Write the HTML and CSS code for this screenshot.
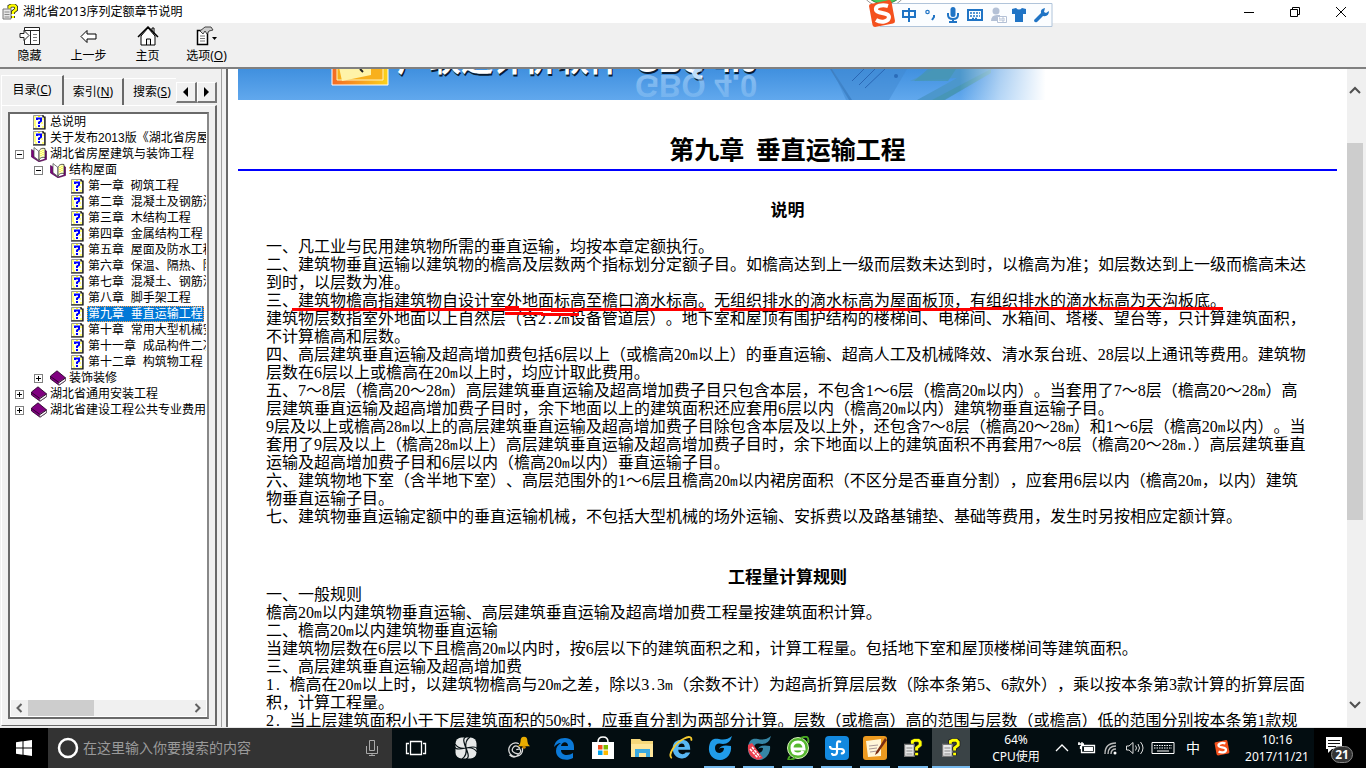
FILE: index.html
```html
<!DOCTYPE html>
<html lang="zh-CN">
<head>
<meta charset="utf-8">
<title>湖北省2013序列定额章节说明</title>
<link rel="stylesheet" href="styles.css">
</head>
<body>
<svg class="defs" aria-hidden="true">
  <defs>
    <symbol id="help" viewBox="0 0 16 16">
      <path d="M1 5h8v10H1z" fill="#e8e8e8" stroke="#777"/><path d="M2.5 8h5M2.5 10.5h5M2.5 13h5" stroke="#888"/>
      <path d="M7.5 4.5V2.5L9.500 1.500h3l1.500 1.500v2.500L11 8v2M11 12v2" fill="none" stroke="#222" stroke-width="4"/>
      <path d="M7.500 4.500V2.500L9.500 1.500h3l1.500 1.500v2.500L11 8v2M11 12v2" fill="none" stroke="#ff0" stroke-width="2.400"/>
    </symbol>
    <symbol id="page" viewBox="0 0 16 16">
      <path d="M2.500 1.500h9l2 2v11h-11z" fill="#fffef0" stroke="#999"/><path d="M3 3h2M11 5h2M3 7h2M3 11h2M11 13h2M4 13h2M10 9h2M3 5h1M3 9h2M7 2.500h2" stroke="#ff0"/>
      <path d="M12 1v2h2v12H2" fill="none" stroke="#000" stroke-width="1.200"/>
      <path d="M6 6V4.500h4v2.500L8 8.500v1.500M8 11v2" fill="none" stroke="#00f" stroke-width="2"/>
    </symbol>
    <symbol id="open" viewBox="0 0 16 16">
      <path d="M.5 3.500L3 5v6l5 4 6-2V4l1.500 1v8.500L8 15.800.5 11z" fill="#800080" stroke="#400040" stroke-width=".6"/>
      <path d="M3 1.500l5 4v9l-5-4z" fill="#fff" stroke="#555" stroke-width=".8"/><path d="M8 5.500c1-3 3-3.500 6-3v9c-3-.5-5 0-6 3z" fill="#ffffc0" stroke="#333" stroke-width=".8"/><path d="M10 5v6M12 4v6" stroke="#ee0" stroke-dasharray="1 1"/>
    </symbol>
    <symbol id="book" viewBox="0 0 16 16">
      <path d="M.5 6L7 .8l8.500 7v3L9 15.200.5 9z" fill="#800080" stroke="#200020" stroke-width=".8"/>
      <path d="M8.500 12l7-4v2.500l-6.500 4.500z" fill="#fff" stroke="#555" stroke-width=".6"/><path d="M.5 6.500l8.500 6 6.500-4.500" fill="none" stroke="#300030"/>
    </symbol>
    <symbol id="sogou" viewBox="0 0 28 28">
      <path d="M1 6Q1 4 3 4L21 0Q23 0 23.500 2L27 21Q27 23 25 23.500L7 27Q5 27 4.500 25Z" fill="#f4511e"/>
      <path d="M20 6C14 4 7 6 8 10s13 2 13 7-8 6-13 3" fill="none" stroke="#fff" stroke-width="4"/>
    </symbol>
  </defs>
</svg>

<header class="titlebar">
  <svg class="app-icon"><use href="#help"/></svg>
  <span class="caption">湖北省2013序列定额章节说明</span>
  <button class="win" aria-label="最小化"><svg viewBox="0 0 12 12"><path d="M1 6.500h10"/></svg></button>
  <button class="win" aria-label="还原"><svg viewBox="0 0 12 12"><path d="M1.500 3.500h7v7h-7zM3.500 3V1.500h7v7H9"/></svg></button>
  <button class="win" aria-label="关闭"><svg viewBox="0 0 12 12"><path d="M1 1l10 10M11 1L1 11"/></svg></button>
</header>

<div class="ime">
  <svg viewBox="0 0 194 30">
    <circle cx="24" cy="-18" r="25" fill="#fff" stroke="#999"/><circle cx="24" cy="-18" r="22" fill="#45c85c" stroke="#397c45"/>
    <path d="M20 3.500h172v23H20z" fill="#fbfdff" stroke="#b0c4da"/>
    <use href="#sogou" x="8" y="0" width="28" height="28"/>
    <g fill="none" stroke="#2074c5" stroke-width="2">
      <path d="M43 11h12v6H43zM49 8v14"/><circle cx="67.500" cy="12" r="1.700" stroke-width="1.200"/><path d="M74 15v2l-2 3"/>
      <path d="M88 13v2q0 4 5 4t5-4v-2M93 19v3M89 22h8"/><path d="M108 10h14v10h-14z"/>
      <path d="M110 13h10M110 16h10M112 18.500h6" stroke-dasharray="2 1" stroke-width="1.500"/>
    </g>
    <rect x="90.500" y="7" width="5" height="10" rx="2.500" fill="#2074c5"/>
    <g fill="#b4c1d6"><circle cx="136" cy="11" r="3.500"/><path d="M131 21q0-6 6-6h3v6z"/><path d="M137.500 16.500h9v6h-9z" fill="#fff" stroke="#b4c1d6"/><path d="M139 18h1v3M142 18h2v3h-2z" fill="none" stroke="#b4c1d6"/></g>
    <path d="M152 9l4-1q3 3 6 0l4 1v5h-3v8h-8v-8h-3z" fill="#2074c5"/>
    <path d="M174 20l7-7q-1-4 4-5l-1 4 2 1 3-2q0 6-6 5l-6 6q-3 1-3-2z" fill="#2074c5"/>
  </svg>
</div>

<nav class="toolbar">
  <button><svg viewBox="0 0 22 20"><path d="M5.500 1.500h15v17h-15zM5 4.500h15M11.500 5v13" fill="#fff" stroke="#222"/><path d="M14 8.500h4M14 11.500h4M14 14.500h4" stroke="#777"/><path d="M1 7.500h4v-3l5 5-5 5v-3H1z" fill="#fff" stroke="#222"/></svg>隐藏</button>
  <button><svg viewBox="0 0 22 20"><path d="M3 10.500l6-6v3.500h9v5H9v3.500z" fill="#fff" stroke="#000"/></svg>上一步</button>
  <button><svg viewBox="0 0 22 20"><path d="M4 10v9h14v-9l-7-8zM9.500 19v-6h4v6M15 6V2h2v6" fill="#fff" stroke="#000"/><path d="M1 11L11 1l10 10" fill="none" stroke="#000" stroke-width="1.500"/></svg>主页</button>
  <button><svg viewBox="0 0 22 20"><path d="M1.500 4.500h10v14h-10z" fill="#fff" stroke="#000" stroke-width="1.500"/><path d="M4 10h5M4 12.500h5M4 15h5" stroke="#777"/><path d="M4 5l5-4 6 0 2 3-4 1-2 3-2-3-2 3z" fill="#ccc" stroke="#444"/><path d="M16 11h5l-2.500 3z"/></svg><span>选项(<u>O</u>)</span></button>
</nav>

<main class="work">
  <aside class="side">
    <div class="tabs">
      <button class="tab current"><span>目录(<u>C</u>)</span></button>
      <button class="tab"><span>索引(<u>N</u>)</span></button>
      <button class="tab last"><span>搜索(<u>S</u>)</span></button>
      <button class="spin" aria-label="向左"><svg viewBox="0 0 10 10"><path d="M7 0v10L2 5z"/></svg></button>
      <button class="spin" aria-label="向右"><svg viewBox="0 0 10 10"><path d="M3 0v10l5-5z"/></svg></button>
    </div>
    <div class="tabpage">
      <div class="treebox">
        <ul class="tree">
          <li class="l0"><i></i><svg><use href="#page"/></svg><a href="#">总说明</a></li>
          <li class="l0"><i></i><svg><use href="#page"/></svg><a href="#">关于发布2013版《湖北省房屋</a></li>
          <li class="l0"><i class="box"></i><svg><use href="#open"/></svg><a href="#">湖北省房屋建筑与装饰工程</a></li>
          <li class="l1"><i class="box"></i><svg><use href="#open"/></svg><a href="#">结构屋面</a></li>
          <li class="l2"><i></i><svg><use href="#page"/></svg><a href="#">第一章  砌筑工程</a></li>
          <li class="l2"><i></i><svg><use href="#page"/></svg><a href="#">第二章  混凝土及钢筋混</a></li>
          <li class="l2"><i></i><svg><use href="#page"/></svg><a href="#">第三章  木结构工程</a></li>
          <li class="l2"><i></i><svg><use href="#page"/></svg><a href="#">第四章  金属结构工程</a></li>
          <li class="l2"><i></i><svg><use href="#page"/></svg><a href="#">第五章  屋面及防水工程</a></li>
          <li class="l2"><i></i><svg><use href="#page"/></svg><a href="#">第六章  保温、隔热、防</a></li>
          <li class="l2"><i></i><svg><use href="#page"/></svg><a href="#">第七章  混凝土、钢筋混</a></li>
          <li class="l2"><i></i><svg><use href="#page"/></svg><a href="#">第八章  脚手架工程</a></li>
          <li class="l2"><i></i><svg><use href="#page"/></svg><a href="#" class="selected">第九章  垂直运输工程</a></li>
          <li class="l2"><i></i><svg><use href="#page"/></svg><a href="#">第十章  常用大型机械安</a></li>
          <li class="l2"><i></i><svg><use href="#page"/></svg><a href="#">第十一章  成品构件二次</a></li>
          <li class="l2"><i></i><svg><use href="#page"/></svg><a href="#">第十二章  构筑物工程</a></li>
          <li class="l1"><i class="box plus"></i><svg><use href="#book"/></svg><a href="#">装饰装修</a></li>
          <li class="l0"><i class="box plus"></i><svg><use href="#book"/></svg><a href="#">湖北省通用安装工程</a></li>
          <li class="l0"><i class="box plus"></i><svg><use href="#book"/></svg><a href="#">湖北省建设工程公共专业费用</a></li>
        </ul>
        <div class="hbar">
          <svg viewBox="0 0 17 15"><path d="M10.500 3.500l-4 4 4 4"/></svg>
          <div class="track"><div class="thumb"></div></div>
          <svg viewBox="0 0 17 15"><path d="M6.500 3.500l4 4-4 4"/></svg>
        </div>
      </div>
    </div>
  </aside>

  <section class="viewer">
    <article class="doc">
      <svg class="banner" viewBox="0 0 820 31">
        <defs>
          <linearGradient id="sky" x2="0" y2="1"><stop stop-color="#4090df"/><stop offset="1" stop-color="#61a8ed"/></linearGradient>
          <linearGradient id="fade"><stop offset=".88" stop-color="#fff" stop-opacity="0"/><stop offset=".93" stop-color="#fff" stop-opacity=".55"/><stop offset=".985" stop-color="#fff"/></linearGradient>
          <linearGradient id="gold"><stop stop-color="#f36a25"/><stop offset="1" stop-color="#fbd21c"/></linearGradient>
          <linearGradient id="mirror" x2="0" y2="1"><stop stop-color="#9bcaf5" stop-opacity=".3"/><stop offset="1" stop-color="#a5d0f8" stop-opacity=".8"/></linearGradient>
        </defs>
        <path d="M0 0h820v31H0z" fill="url(#sky)"/>
        <path d="M594 0l20 31h-3L592 0z" fill="#3f7fc0"/><path d="M608 31L594 0h75l-18 31z" fill="#4088d0" opacity=".5"/><path d="M672 12l25-12h56v4l-46 27h-28l40-22z" fill="#4c97cc"/><path d="M694 31l59-31v4l-47 27zM676 12l14-12h28l-8 12z" fill="#4696ae" opacity=".7"/>
        <path d="M614 12l12-12M621 16l16-16M627 19l20-19" stroke="#2a66b4"/><circle cx="658" cy="7" r="2" fill="#2b6cb9"/>
        <path d="M94-4h56v20H94z" fill="url(#gold)" stroke="#fff"/><path d="M99-4h46v15H99z" fill="#f8b01d" stroke="#fff3c0"/><path d="M101-2l32-3v11l-29 6z" fill="#fff3a8"/><path d="M122 0l3 3" stroke="#222" stroke-width="2"/>
        <g class="logo shade" fill="#fff"><text x="159" y="2">广联达计价软件</text><text class="latin" x="397" y="3">GBQ 4.0</text></g>
        <text class="latin" x="397" y="-6" transform="scale(1 -1)" fill="url(#mirror)">GBQ 4.0</text>
        <path d="M0 0h820v31H0z" fill="url(#fade)"/>
      </svg>
      <h1>第九章&nbsp; 垂直运输工程</h1>
      <h2 class="first">说明</h2>
      <div class="text">
        <svg class="marks" viewBox="0 0 960 90"><g fill="none" stroke="#f00" stroke-width="3"><path d="M26 71.500h414M454 71.500h252M704 70.500h253M239 75.500h38M275 76.500h38M239 69.500h14M285 72.500h28"/></g></svg>
        一、凡工业与民用建筑物所需的垂直运输，均按本章定额执行。<br>
        二、建筑物垂直运输以建筑物的檐高及层数两个指标划分定额子目。如檐高达到上一级而层数未达到时，以檐高为准；如层数达到上一级而檐高未达<br>
        到时，以层数为准。<br>
        三、建筑物檐高指建筑物自设计室外地面标高至檐口滴水标高。无组织排水的滴水标高为屋面板顶，有组织排水的滴水标高为天沟板底。<br>
        建筑物层数指室外地面以上自然层（含2<b>.</b>2<b>m</b>设备管道层）。地下室和屋顶有围护结构的楼梯间、电梯间、水箱间、塔楼、望台等，只计算建筑面积，<br>
        不计算檐高和层数。<br>
        四、高层建筑垂直运输及超高增加费包括6层以上（或檐高20<b>m</b>以上）的垂直运输、超高人工及机械降效、清水泵台班、28层以上通讯等费用。建筑物<br>
        层数在6层以上或檐高在20<b>m</b>以上时，均应计取此费用。<br>
        五、7～8层（檐高20～28<b>m</b>）高层建筑垂直运输及超高增加费子目只包含本层，不包含1～6层（檐高20<b>m</b>以内）。当套用了7～8层（檐高20～28<b>m</b>）高<br>
        层建筑垂直运输及超高增加费子目时，余下地面以上的建筑面积还应套用6层以内（檐高20<b>m</b>以内）建筑物垂直运输子目。<br>
        9层及以上或檐高28<b>m</b>以上的高层建筑垂直运输及超高增加费子目除包含本层及以上外，还包含7～8层（檐高20～28<b>m</b>）和1～6层（檐高20<b>m</b>以内）。当<br>
        套用了9层及以上（檐高28<b>m</b>以上）高层建筑垂直运输及超高增加费子目时，余下地面以上的建筑面积不再套用7～8层（檐高20～28<b>m.</b>）高层建筑垂直<br>
        运输及超高增加费子目和6层以内（檐高20<b>m</b>以内）垂直运输子目。<br>
        六、建筑物地下室（含半地下室）、高层范围外的1～6层且檐高20<b>m</b>以内裙房面积（不区分是否垂直分割），应套用6层以内（檐高20<b>m</b>，以内）建筑<br>
        物垂直运输子目。<br>
        七、建筑物垂直运输定额中的垂直运输机械，不包括大型机械的场外运输、安拆费以及路基铺垫、基础等费用，发生时另按相应定额计算。
      </div>
      <h2 class="second">工程量计算规则</h2>
      <div class="text">
        一、一般规则<br>
        檐高20<b>m</b>以内建筑物垂直运输、高层建筑垂直运输及超高增加费工程量按建筑面积计算。<br>
        二、檐高20<b>m</b>以内建筑物垂直运输<br>
        当建筑物层数在6层以下且檐高20<b>m</b>以内时，按6层以下的建筑面积之和，计算工程量。包括地下室和屋顶楼梯间等建筑面积。<br>
        三、高层建筑垂直运输及超高增加费<br>
        1<b>.&nbsp;</b>檐高在20<b>m</b>以上时，以建筑物檐高与20<b>m</b>之差，除以3<b>.</b>3<b>m</b>（余数不计）为超高折算层层数（除本条第5、6款外），乘以按本条第3款计算的折算层面<br>
        积，计算工程量。<br>
        2<b>.&nbsp;</b>当上层建筑面积小于下层建筑面积的50<b>%</b>时，应垂直分割为两部分计算。层数（或檐高）高的范围与层数（或檐高）低的范围分别按本条第1款规
      </div>
    </article>
    <div class="vbar">
      <svg viewBox="0 0 16 16"><path d="M3 11l5-5 5 5"/></svg>
      <div class="track"><div class="thumb"></div></div>
      <svg viewBox="0 0 16 16"><path d="M3 5l5 5 5-5"/></svg>
    </div>
  </section>
</main>

<footer class="taskbar">
  <button class="start" aria-label="开始"><svg viewBox="0 0 16 16"><path d="M0 2.300l6.500-1v6.200H0zM7.500 1.200L16 0v7.500H7.500zM0 8.500h6.500v6.200L0 13.700zM7.500 8.500H16V16l-8.500-1.200z" fill="#fff"/></svg></button>
  <label class="search">
    <svg class="ring" viewBox="0 0 22 22"><circle cx="11" cy="11" r="9" fill="none" stroke="#fff" stroke-width="2.500"/></svg>
    <input type="text" placeholder="在这里输入你要搜索的内容" aria-label="搜索">
    <svg class="mic" viewBox="0 0 12 16"><path d="M3.500.5h5v10h-5zM.5 6v7.500h11V6M6 13.500V16M3 15.500h6" fill="none" stroke="#aaa"/></svg>
  </label>
  <div class="apps">
    <button class="w48" aria-label="任务视图"><svg viewBox="0 0 24 24"><path d="M6.500 5.500h11v13h-11zM5 7.500H2.500v10H5M19 7.500h2.500v10H19" fill="none" stroke="#fff" stroke-width="1.300"/></svg></button>
    <button class="w52" aria-label="搜狗"><svg viewBox="0 0 24 24"><rect x="1.500" y="1.500" width="21" height="21" rx="6" fill="#e6e8e8"/><path d="M12 12C6 13 3 11 1 8M12 12C11 6 13 3 16 1M12 12c6-1 9 1 11 4M12 12c1 6-1 9-4 11M12 1q-3 1-2 5 1 4 2 6 5-1 7-1 4 0 4 2M12 23q3-1 2-5-1-4-2-6-5 1-7 1-4 0-4-2" fill="none" stroke="#071216" stroke-width="1.200"/></svg></button>
    <button class="w52" aria-label="提醒"><svg viewBox="0 0 28 28"><path d="M19 14a8 8 0 1 1-4-5M16 14q-5-5-8 0t6 7q5-2 2-6l-4 1M4 22q5 5 11 0" fill="none" stroke="#ddd" stroke-width="1.500"/><path d="M14 12q3-2 3-6 0-5 4-5t4 5q0 4 3 6z" fill="#e9ac00"/><circle cx="21" cy="13" r="2" fill="#c98500"/></svg></button>
    <button class="w39" aria-label="Edge"><svg viewBox="0 0 24 24"><path d="M2 11C3 5 7 2 13 2c6 0 9 4 9 9v3H9c0 6 8 6 12 3v5C14 26 4 23 4 15c0-4 2-6 5-8-3 0-5 2-7 4zm7-1h7c0-5-6-5-7 0z" fill="#0b79d8"/></svg></button>
    <button class="w39" aria-label="应用商店"><svg viewBox="0 0 24 24"><path d="M1 6h22v17H1z" fill="#fff"/><path d="M7 6q0-5 5-5t5 5" fill="none" stroke="#fff" stroke-width="1.500"/><path d="M7 9h4.500v4.500H7z" fill="#f25022"/><path d="M12.500 9H17v4.500h-4.500z" fill="#7fba00"/><path d="M7 14.500h4.500V19H7z" fill="#00a4ef"/><path d="M12.500 14.500H17V19h-4.500z" fill="#ffb900"/></svg></button>
    <button class="w39" aria-label="文件资源管理器"><svg viewBox="0 0 24 24"><path d="M1 3h9l2 2h11v16H1z" fill="#f6d77a"/><path d="M1 8h22v13H1z" fill="#ffe69a"/><path d="M5 21v-8h15v8h-4v-4H9v4z" fill="#3ba9e0"/></svg></button>
    <button class="w39" aria-label="Internet Explorer"><svg viewBox="0 0 26 26"><path d="M4 13C4 7 8 4 14 4s9 4 9 11H10c0 5 6 6 8 3h5c-3 6-7 7-11 6-5-1-8-5-8-11zm6-1h7c0-5-6-5-7 0z" fill="#58b7f3"/><path d="M3 24C-2 21 6 8 16 3c7-4 9-1 8 2" fill="none" stroke="#f7cc31" stroke-width="2"/></svg></button>
    <button class="w39 running" aria-label="广联达"><svg viewBox="0 0 24 24"><path d="M11 3q7 2 13-3-2 8-9 8-8-2-8 4 0 5 5 5 4-1 4-5-3-1-5 1 2-5 12-3c1 7-4 14-11 14S0 18 1 11 5 2 11 3z" fill="#209ce9"/></svg></button>
    <button class="w39 running" aria-label="广联达计价"><svg viewBox="0 0 24 24"><path d="M11 3q7 2 13-3-2 8-9 8-8-2-8 4 0 5 5 5 4-1 4-5-3-1-5 1 2-5 12-3c1 7-4 14-11 14S0 18 1 11 5 2 11 3z" fill="#3686a6"/><path d="M1 9l4-2 11 15-5 2Q0 21 1 9z" fill="#ec4050"/><path d="M3 13l8 9M5 11l8 10" stroke="#fff" stroke-width="1.500" stroke-dasharray="3 1"/></svg></button>
    <button class="w39 running" aria-label="浏览器"><svg viewBox="0 0 24 24"><circle cx="12" cy="12" r="10.500" fill="#56b82f" stroke="#d5f0b8"/><path d="M7 13h11q0-7-6-7t-6 6 6 6q4 0 5-3" fill="none" stroke="#fff" stroke-width="3"/><path d="M4 20Q-1 27 9 22M15 2q9-4 7 5" fill="none" stroke="#46a51f" stroke-width="2"/></svg></button>
    <button class="w39 running" aria-label="助手"><svg viewBox="0 0 24 24"><rect width="24" height="24" rx="4" fill="#1288df"/><path d="M16 6q-4-2-4 2v8q0 3-3 3-2 0-2-2M5 10q0 3 3 3h8q3 0 3 3-1 2-3 1" fill="none" stroke="#fff" stroke-width="2.200"/></svg></button>
    <button class="w38 running" aria-label="记事"><svg viewBox="0 0 24 24"><rect width="24" height="24" rx="3" fill="#ed9a20"/><path d="M3 5l15-2v17L5 21z" fill="#fff6d8"/><path d="M6 10l9-1M6 13l8-1M7 16l7-1" stroke="#a99"/><path d="M22 2l-9 14-1 3 3-2 9-13z" fill="#7c2c10"/></svg></button>
    <button class="w38 running" aria-label="帮助"><svg viewBox="-2 -2 20 20"><use href="#help" width="16" height="16"/></svg></button>
    <button class="w38 running active" aria-label="定额说明"><svg viewBox="-2 -2 20 20"><use href="#help" width="16" height="16"/></svg></button>
  </div>
  <div class="cpu"><span>64%</span><span>CPU使用</span></div>
  <div class="tray">
    <svg viewBox="0 0 24 16"><path d="M6 11l6-6 6 6" fill="none" stroke="#fff" stroke-width="1.300"/></svg>
    <svg viewBox="0 0 24 16"><path d="M7.500 5.500h13v7h-13zM4 4h6M5 2v3M8 2v3M6.500 6v3" fill="none" stroke="#fff" stroke-width="1.300"/><path d="M10 7h9v4h-9z" fill="#fff"/></svg>
    <svg viewBox="0 0 24 16"><path d="M7 14Q7 3 18 3M10 14q0-8 8-8M13 14q0-5 5-5" fill="none" stroke="#bbb" stroke-width="1.400"/><circle cx="17" cy="13" r="1.500" fill="#fff"/></svg>
    <svg viewBox="0 0 24 16"><path d="M4.500 6H7l4-3.500v11L7 10H4.500zM13.500 5.500q2 2.500 0 5M16 4q3 4 0 8M18.500 2q5 6 0 12" fill="none" stroke="#ddd"/></svg>
    <svg class="kb" viewBox="0 0 24 16"><path d="M1 2.500h22v11H1z" fill="none" stroke="#fff"/><path d="M3 5.500h18M3 8h18" stroke="#fff" stroke-dasharray="1.500 1"/><path d="M6 11h12" stroke="#fff"/></svg>
    <span class="lang">中</span>
    <svg class="sg"><use href="#sogou"/></svg>
  </div>
  <div class="clock"><span>10:16</span><span>2017/11/21</span></div>
  <button class="notify" aria-label="通知"><svg viewBox="0 0 30 28"><path d="M4 3h16v12H10l-4 4v-4H4z" fill="#fff"/><path d="M6 6.500h12M6 9.500h12M6 12.500h8" stroke="#111"/></svg><span class="count">21</span></button>
</footer>
</body>
</html>
```
FILE: styles.css
```css
* { box-sizing: border-box; }
body {
  margin: 0;
  height: 100vh;
  display: flex;
  flex-direction: column;
  overflow: hidden;
  background: #f0f0f0;
  color: #000;
  font: 12px/16px "Noto Sans", "Noto Sans CJK SC", sans-serif;
}
button { margin: 0; padding: 0; border: 0; background: none; font: inherit; color: inherit; }
svg { display: block; flex: none; }
.defs { position: absolute; width: 0; height: 0; }

.titlebar { display: flex; align-items: center; height: 23px; flex: none; background: #fff; padding: 0 2px; }
.app-icon { width: 16px; height: 16px; margin-right: 5px; }
.caption { flex: 1; }
.win { width: 46px; height: 20px; display: flex; align-items: center; justify-content: center; }
.win svg { width: 12px; height: 12px; fill: none; stroke: #000; }
.ime { position: absolute; top: 0; right: 312px; width: 194px; height: 30px; overflow: hidden; }

.toolbar { display: flex; height: 44px; flex: none; }
.toolbar button { width: 59px; padding-top: 3px; display: flex; flex-direction: column; align-items: center; gap: 2px; }
.toolbar svg { width: 22px; height: 20px; }

.work { flex: 1; min-height: 0; display: flex; border-top: 2px solid #808080; border-bottom: 1px solid #e8e8e8; }
.side { width: 222px; flex: none; display: flex; flex-direction: column; padding: 6px 4px 1px 1px; border-right: 1px solid #a0a0a0; }
.tabs { display: flex; align-items: flex-end; height: 30px; }
.tab { height: 27px; width: 60px; border-top: 1px solid #fff; border-right: 2px solid #696969; white-space: nowrap; overflow: hidden; flex: none; }
.tab.current { width: 63px; height: 30px; border-left: 1px solid #fff; padding-bottom: 2px; }
.tab.last { width: 52px; border-right: 0; padding-left: 9px; text-align: left; }
.spin { flex: 1; height: 21px; margin-bottom: 2px; display: flex; align-items: center; justify-content: center; border: 1px solid #fff; border-right: 2px solid #777; border-bottom: 2px solid #777; }
.spin svg { width: 10px; height: 10px; }
.tabpage { flex: 1; min-height: 0; padding: 6px; border: 1px solid #fff; border-right: 2px solid #696969; border-bottom: 1px solid #696969; display: flex; }
.treebox { flex: 1; min-width: 0; display: flex; flex-direction: column; background: #fff; border: 2px solid #696969; border-right-color: #888; padding: 0 1px 1px; }
.tree { flex: 1; margin: 0; padding: 0; list-style: none; overflow: hidden; }
.tree li { display: flex; align-items: center; height: 16px; white-space: pre; }
.tree .l0 { padding-left: 4px; }
.tree .l1 { padding-left: 23px; }
.tree .l2 { padding-left: 42px; }
.tree svg { width: 16px; height: 16px; margin: 0 2px 0 7px; }
.tree a { color: #000; text-decoration: none; font-family: "Liberation Sans", "Noto Sans CJK SC", sans-serif; line-height: 16px; padding: 0 1px; height: 16px; }
.tree a.selected { background: #0078d7; color: #fff; outline: 1px dotted #ff9a40; outline-offset: -1px; }
.tree i { width: 9px; height: 9px; flex: none; }
.tree i.box { border: 1px solid #808080; background: linear-gradient(#000, #000) center / 5px 1px no-repeat; }
.tree i.plus { background: linear-gradient(#000, #000) center / 5px 1px no-repeat, linear-gradient(#000, #000) center / 1px 5px no-repeat; }
.hbar { display: flex; height: 16px; flex: none; background: #f0f0f0; }
.hbar svg { width: 17px; height: 16px; fill: none; stroke: #606060; stroke-width: 2; }
.track { flex: 1; }
.hbar .thumb { width: 41%; height: 100%; background: #cdcdcd; }

.viewer { flex: 1; min-width: 0; display: flex; margin-left: 4px; border-left: 2px solid #696969; background: #fff; }
.doc { flex: 1; min-width: 0; overflow: hidden; padding: 0 10px; font-family: "Liberation Serif", "Noto Sans CJK SC", serif; text-spacing-trim: space-all; }
.banner { width: 820px; height: 31px; overflow: hidden; }
.logo { font: 700 32px "Noto Sans CJK SC", sans-serif; }
.shade { text-shadow: 1px 2px 0 #071b33; }
.latin { font: 700 31px "Liberation Sans", sans-serif; }
h1 { margin: 0; padding: 32px 0 5px; font: 700 25px/32px "Noto Sans CJK SC", sans-serif; text-align: center; border-bottom: 2px solid #00f; }
h2 { margin: 0; font: 700 17px/18px "Noto Sans CJK SC", sans-serif; text-align: center; }
h2.first { padding: 29px 0 20px; }
h2.second { padding: 41px 0 1px; }
.text { position: relative; padding: 0 20px 0 28px; font-size: 16px; line-height: 18px; }
.text b { font: 13px/0 "Liberation Mono", monospace; }
.marks { position: absolute; left: 28px; top: 0; width: 960px; height: 90px; }
.vbar { width: 19px; flex: none; display: flex; flex-direction: column; background: #f0f0f0; padding: 13px 3px 14px 0; }
.vbar svg { width: 16px; height: 16px; fill: none; stroke: #505050; stroke-width: 2; }
.vbar .track { padding-top: 45px; }
.vbar .thumb { height: 68%; background: #cdcdcd; }

.taskbar { height: 40px; flex: none; display: flex; background: #030d11; color: #fff; font-size: 12px; }
.start { width: 48px; background: #000; display: flex; align-items: center; justify-content: center; }
.start svg { width: 16px; height: 16px; }
.search { width: 344px; display: flex; align-items: center; background: #333; padding: 0 14px 0 9px; gap: 4px; }
.ring { width: 22px; height: 22px; }
.search input { flex: 1; min-width: 0; border: 0; padding: 0; background: none; font: 14px/20px "Noto Sans", "Noto Sans CJK SC", sans-serif; color: #fff; }
.search input::placeholder { color: #9a9a9a; opacity: 1; }
.mic { width: 12px; height: 16px; }
.apps { display: flex; flex: none; }
.apps button { display: flex; align-items: center; justify-content: center; position: relative; }
.apps svg { width: 24px; height: 24px; }
.w38 { width: 38px; }
.w39 { width: 39px; }
.w48 { width: 48px; }
.w52 { width: 52px; }
.running::after { content: ""; position: absolute; bottom: 0; left: 4px; right: 4px; height: 2px; background: #76b9ed; }
.active { background: #3a4346; }
.active::after { left: 0; right: 0; }
.cpu, .clock { display: flex; flex-direction: column; align-items: center; padding-top: 3px; line-height: 17px; }
.cpu { flex: 1; padding-left: 12px; }
.tray { display: flex; align-items: center; width: 190px; }
.tray svg { width: 24px; height: 16px; }
.tray .kb { margin: 0 5px; }
.lang { font-size: 14px; width: 26px; text-align: center; }
.tray .sg { width: 16px; height: 16px; margin-left: 8px; }
.clock { width: 74px; }
.notify { width: 52px; display: flex; align-items: center; position: relative; background: #000; padding-left: 8px; }
.notify svg { width: 30px; height: 28px; }
.count { position: absolute; left: 17px; top: 18px; width: 22px; height: 17px; border: 1px solid #888; border-radius: 9px; background: #333; font-weight: 700; line-height: 15px; text-align: center; }
```
